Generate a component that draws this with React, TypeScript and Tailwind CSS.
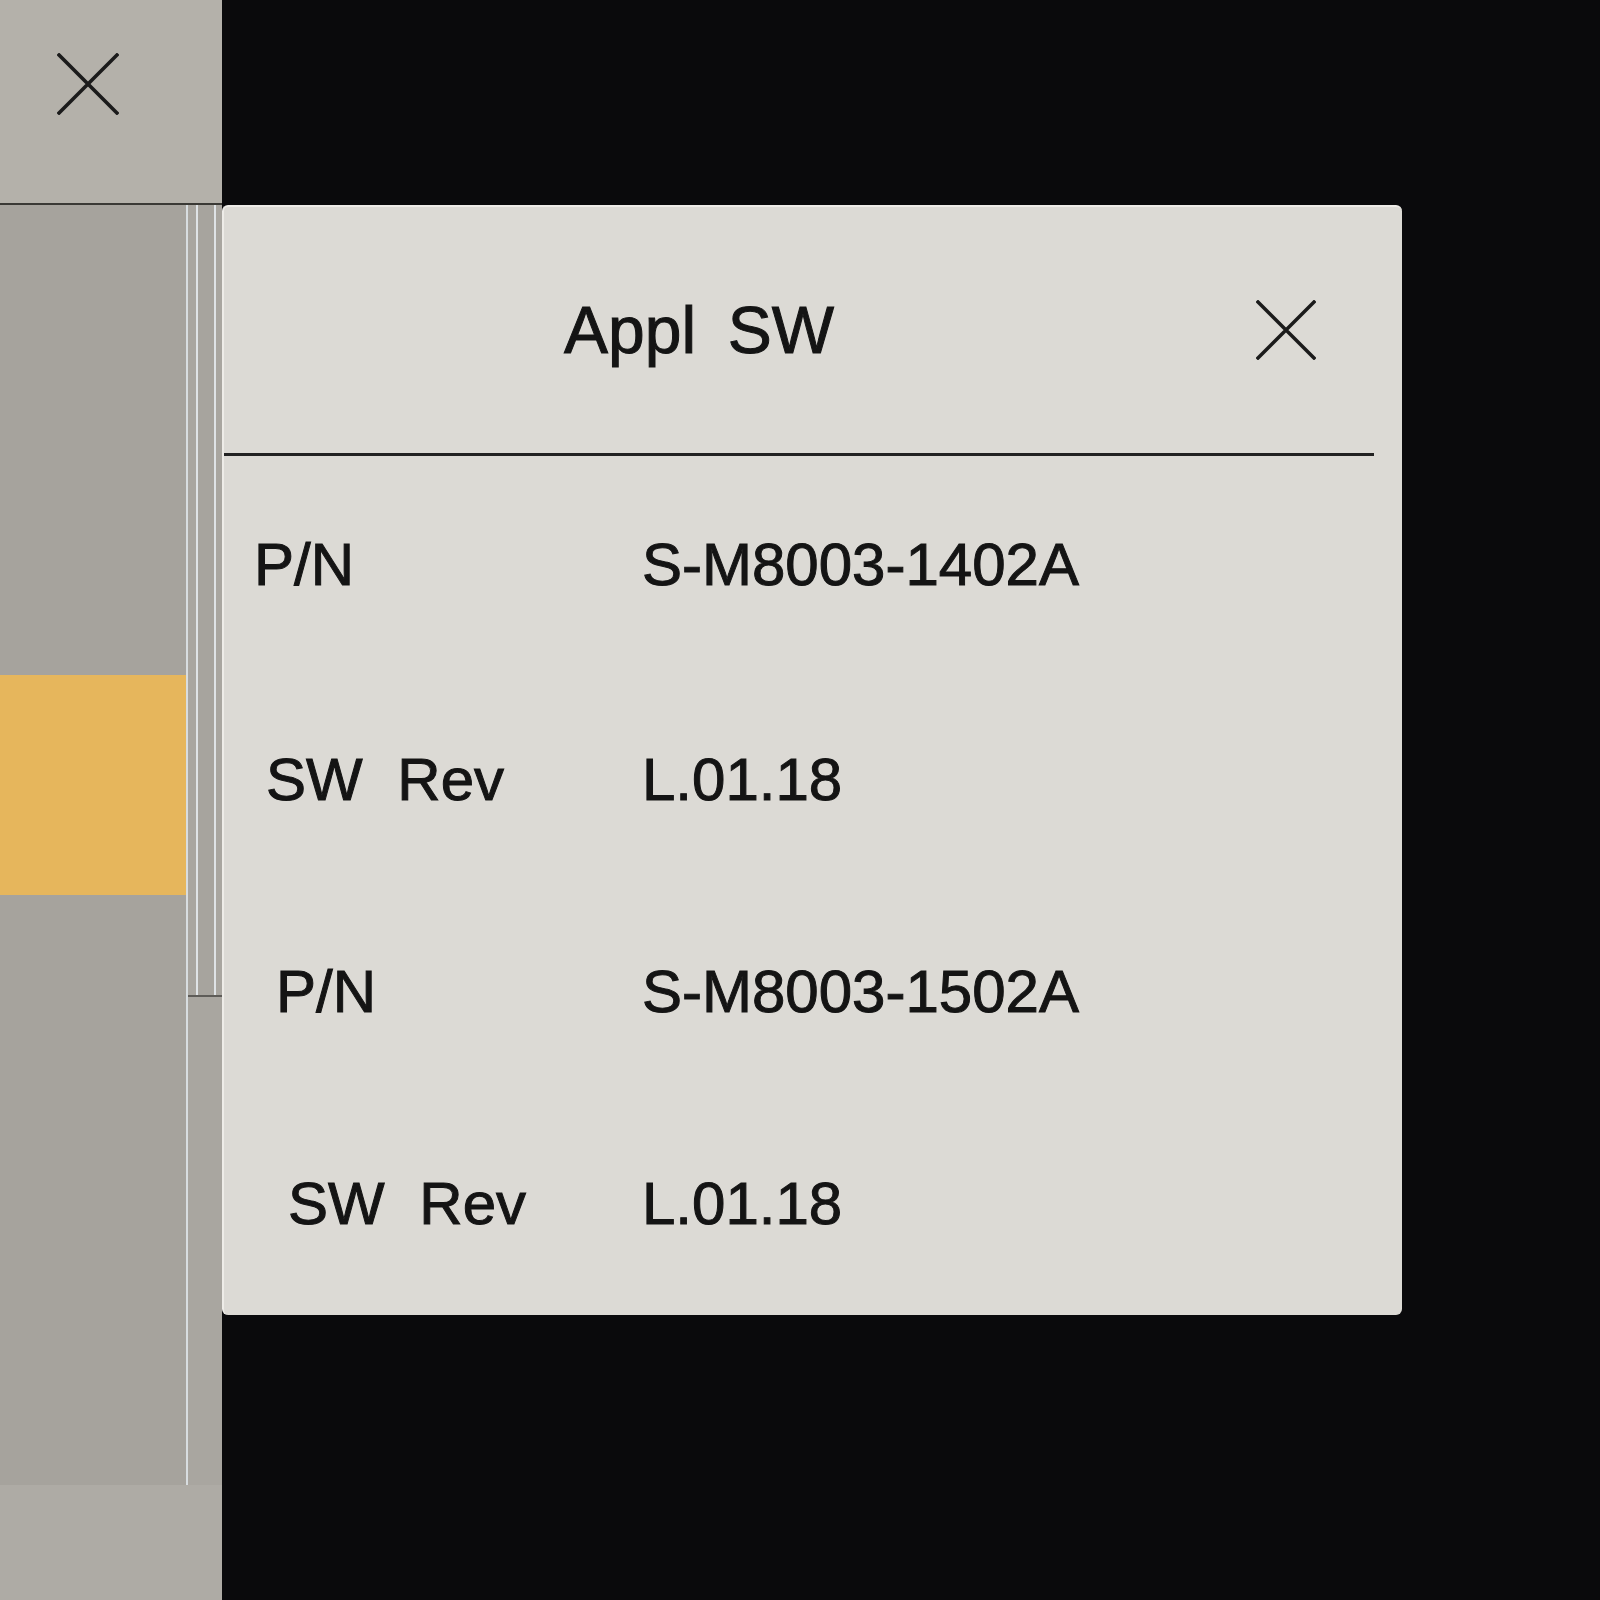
import React from "react";

const rows = [
  { label: "P/N", value: "S-M8003-1402A", indent: "pl-[0px]" },
  { label: "SW Rev", value: "L.01.18", indent: "pl-[12px]" },
  { label: "P/N", value: "S-M8003-1502A", indent: "pl-[22px]" },
  { label: "SW Rev", value: "L.01.18", indent: "pl-[34px]" },
];

function Cross({ size, stroke }: { size: number; stroke: number }) {
  return (
    <svg width={size} height={size} viewBox="0 0 60 60" fill="none">
      <path d="M2 2 L58 58 M58 2 L2 58" stroke="#1b1b1b" strokeWidth={stroke} strokeLinecap="square" />
    </svg>
  );
}

export default function App() {
  return (
    <div className="flex h-[1600px] w-[1600px] overflow-hidden bg-[#0a0a0c] font-['Liberation_Sans',Arial,sans-serif] text-[#141414]">
      {/* left side panel, partly hidden behind the dialog */}
      <div className="flex w-[222px] shrink-0 flex-col">
        <div className="flex h-[205px] items-start border-b-2 border-[#3a3935] bg-[#b4b1aa] pl-[57px] pt-[53px]">
          <Cross size={62} stroke={3.5} />
        </div>
        <div className="flex h-[1280px] bg-[#a6a39d]">
          <div className="flex flex-1 flex-col">
            <div className="h-[470px]" />
            <div className="h-[220px] bg-[#e6b65c]" />
            <div className="flex-1" />
          </div>
          <div className="flex w-[36px] flex-col border-l-2 border-[#d8dde0] bg-[#a9a6a0]">
            <div className="ml-[8px] h-[790px] w-[20px] border-x-2 border-[#dfe3e6] bg-[#a7a49e]" />
            <div className="flex-1 border-t-2 border-[#5e5c58]" />
          </div>
        </div>
        <div className="flex-1 bg-[#aeaba5]" />
      </div>

      {/* dialog */}
      <div className="mt-[205px] flex h-[1110px] w-[1180px] flex-col rounded-[6px] border-t-2 border-l-2 border-[#eeece8] bg-[#dcdad5]">
        <div className="flex h-[246px] items-center pl-[340px] pr-[86px]">
          <span className="text-[66px] leading-none [-webkit-text-stroke:1px_#141414] [word-spacing:0.2em]">Appl SW</span>
          <div className="ml-auto">
            <Cross size={60} stroke={3.5} />
          </div>
        </div>
        <div className="mr-[28px] h-[3px] bg-[#222]" />
        <div className="flex flex-col pl-[30px]">
          {rows.map((r, i) => (
            <div
              key={i}
              className={`flex items-center text-[60px] leading-none [-webkit-text-stroke:1px_#141414] ${i === 0 ? "h-[218px]" : "h-[212px]"}`}
            >
              <span className={`w-[388px] [word-spacing:0.3em] ${r.indent}`}>{r.label}</span>
              <span>{r.value}</span>
            </div>
          ))}
        </div>
      </div>
      <div className="flex-1" />
    </div>
  );
}
